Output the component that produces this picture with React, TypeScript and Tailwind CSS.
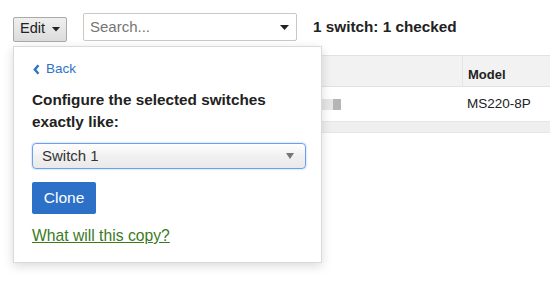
import React from "react";

export default function App() {
  const font = { fontFamily: '"Liberation Sans", Arial, sans-serif' };
  return (
    <div className="relative w-[550px] h-[285px] bg-white overflow-hidden text-[#222]" style={font}>
      {/* Toolbar */}
      <div className="flex items-center pl-[13px] pt-[13px] h-[41px]">
        <div className="flex items-center h-[25px] w-[54px] mt-[4px] pl-[6px] border border-[#a9a9a9] rounded-[2px] bg-gradient-to-b from-[#efefef] to-[#dcdcdc] text-[14.5px]">
          <span>Edit</span>
          <svg width="8" height="5" viewBox="0 0 8 5" className="ml-[7px]">
            <path d="M0 0 L8 0 L4 4.5 Z" fill="#222" />
          </svg>
        </div>
        <div className="ml-[16px] flex items-center justify-between w-[214px] h-[28px] border border-[#c8c8c8] rounded-[2px] bg-white pl-[6px] pr-[7px]">
          <span className="text-[15px] text-[#757575]">Search...</span>
          <svg width="9" height="5" viewBox="0 0 9 5">
            <path d="M0 0 L9 0 L4.5 5 Z" fill="#222" />
          </svg>
        </div>
        <div className="ml-[16px] mt-[1px] text-[15.3px] font-bold">1 switch: 1 checked</div>
      </div>

      {/* Table behind */}
      <div className="mt-[14px] ml-[13px]">
        <div className="flex h-[32px] bg-[#f2f2f2] border-t border-b border-[#e2e2e2]">
          <div className="w-[449px]" />
          <div className="flex-1 border-l border-[#e4e4e4] pl-[5px] pt-[9px] text-[13px] font-bold">Model</div>
        </div>
        <div className="flex h-[35px] items-center border-b border-[#e6e6e6]">
          <div className="w-[449px] flex items-center justify-end pr-[121px]">
            <div className="w-[11px] h-[11px] bg-[#e6e6e6]" />
            <div className="w-[8px] h-[11px] bg-[#b5b5b5]" />
          </div>
          <div className="flex-1 pl-[5px] text-[13.5px]">MS220-8P</div>
        </div>
        <div className="h-[11px] bg-[#efefef] border-b border-[#e6e6e6]" />
      </div>

      {/* Popover */}
      <div className="absolute left-[13px] top-[46px] w-[309px] h-[217px] bg-white border border-[#dadada] shadow-[0_3px_10px_rgba(0,0,0,0.15)] pl-[18px] pr-[16px] pt-[13px]">
        <div className="flex items-center h-[18px] text-[13.5px] text-[#2e72c6]">
          <svg width="7" height="11" viewBox="0 0 7 11" className="mr-[6px] ml-[1px]">
            <path d="M5.5 1.2 L1.8 5.5 L5.5 9.8" stroke="#2e72c6" strokeWidth="2.4" fill="none" />
          </svg>
          <span>Back</span>
        </div>
        <div className="mt-[11px] text-[15.3px] font-bold leading-[22px] whitespace-nowrap">
          Configure the selected switches
          <br />
          exactly like:
        </div>
        <div className="mt-[10px] flex items-center justify-between w-[274px] h-[26px] rounded-[4px] border border-[#6b9ff0] shadow-[0_0_2px_rgba(80,140,240,0.6)] bg-gradient-to-b from-white via-[#f1f1f1] to-[#e9e9e9] pl-[9px] pr-[11px]">
          <span className="text-[15px] text-[#333]">Switch 1</span>
          <svg width="8" height="6" viewBox="0 0 8 6">
            <path d="M0 0 L8 0 L4 6 Z" fill="#777" />
          </svg>
        </div>
        <div className="mt-[13px] w-[64px] h-[32px] rounded-[2px] bg-[#2c70c8] text-white text-[15.5px] flex items-center justify-center">
          Clone
        </div>
        <div className="mt-[12px] text-[15.7px] leading-[20px] text-[#3b7a1e] underline">What will this copy?</div>
      </div>
    </div>
  );
}
